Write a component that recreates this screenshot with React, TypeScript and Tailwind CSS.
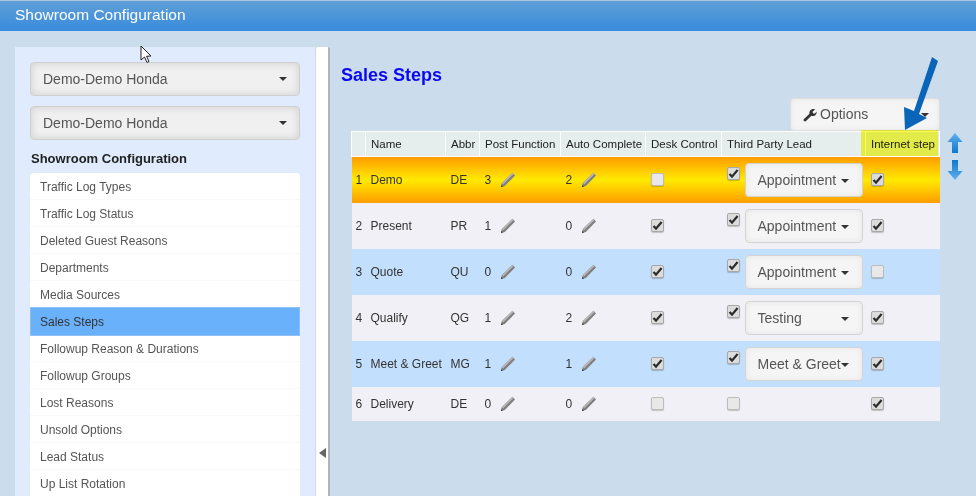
const menu = [
  "Traffic Log Types",
  "Traffic Log Status",
  "Deleted Guest Reasons",
  "Departments",
  "Media Sources",
  "Sales Steps",
  "Followup Reason & Durations",
  "Followup Groups",
  "Lost Reasons",
  "Unsold Options",
  "Lead Status",
  "Up List Rotation",
];

const steps = [
  { n: 1, name: "Demo", abbr: "DE", post: 3, auto: 2, desk: false, third: true, lead: "Appointment", net: true },
  { n: 2, name: "Present", abbr: "PR", post: 1, auto: 0, desk: true, third: true, lead: "Appointment", net: true },
  { n: 3, name: "Quote", abbr: "QU", post: 0, auto: 0, desk: true, third: true, lead: "Appointment", net: false },
  { n: 4, name: "Qualify", abbr: "QG", post: 1, auto: 2, desk: true, third: true, lead: "Testing", net: true },
  { n: 5, name: "Meet & Greet", abbr: "MG", post: 1, auto: 1, desk: true, third: true, lead: "Meet & Greet", net: true },
  { n: 6, name: "Delivery", abbr: "DE", post: 0, auto: 0, desk: false, third: false, lead: "", net: true },
];

function Caret() {
  return <span className="inline-block w-0 h-0 border-x-[4px] border-x-transparent border-t-[4px] border-t-[#333]" />;
}

function Pencil() {
  return (
    <svg width="16" height="16" viewBox="0 0 16 16" className="inline-block">
      <path d="M1 15 L1.8 11 L12.5 0.8 L15 3.4 L4.8 14 Z" fill="#7f7f7f" />
      <path d="M1.8 11 L12.5 0.8 L13.6 2 L3 12.4 Z" fill="#b8b8b8" />
      <path d="M1 15 L1.4 13 L3 14.6 Z" fill="#333" />
    </svg>
  );
}

function Check({ on }: { on: boolean }) {
  return (
    <span
      className={`inline-flex items-center justify-center w-[13px] h-[13px] rounded-[2px] border shadow-[0_1px_1px_rgba(0,0,0,0.2)] ${
        on ? "bg-[#dcdcdc] border-[#a8a8a8]" : "bg-[#e8e8e8] border-[#bcbcbc]"
      }`}
    >
      {on && (
        <svg width="11" height="11" viewBox="0 0 11 11">
          <path d="M1.5 6 L4 8.6 L9.6 2" fill="none" stroke="#2b2b2b" strokeWidth="2.2" />
        </svg>
      )}
    </span>
  );
}

function Select() {
  return (
    <div className="flex items-center justify-between h-[34px] pl-[12px] pr-[12px] rounded-[4px] border border-[#cfcfcf] bg-[#f0f0f0] shadow-[inset_0_0_8px_rgba(0,0,0,0.14)] text-[14px] text-[#555]">
      <span>Demo-Demo Honda</span>
      <Caret />
    </div>
  );
}

function BlueArrow({ down }: { down?: boolean }) {
  return (
    <svg width="16" height="20" viewBox="0 0 16 20" className={down ? "rotate-180" : ""}>
      <defs>
        <linearGradient id={down ? "ad" : "au"} x1="0" y1="0" x2="0" y2="1">
          <stop offset="0" stopColor="#5fb0ee" />
          <stop offset="1" stopColor="#0f78cc" />
        </linearGradient>
      </defs>
      <path d="M8 0 L15.5 9 L11 9 L11 20 L5 20 L5 9 L0.5 9 Z" fill={`url(#${down ? "ad" : "au"})`} />
    </svg>
  );
}

export default function App() {
  return (
    <div className="relative w-[976px] h-[496px] overflow-hidden bg-[#cbdcec] font-['Liberation_Sans',Arial,sans-serif]">
      <header className="h-[31px] pl-[15px] pt-[2px] bg-[linear-gradient(#609fd6,#388bdd)] border-t border-[#a9c6df] text-white text-[15.5px] leading-[24px]">
        Showroom Configuration
      </header>

      <div className="flex h-[465px] pt-[16px] pl-[15px]">
        <aside className="w-[300px] bg-[#e0ecfd] px-[15px] pt-[15px]">
          <div className="flex flex-col gap-[10px]">
            <Select />
            <Select />
          </div>
          <h4 className="mt-[11px] mb-[6px] pl-px text-[13px] leading-[16px] font-bold text-[#222]">Showroom Configuration</h4>
          <ul className="rounded-t-[4px] bg-white text-[12px] text-[#555]">
            {menu.map((m) =>
              m === "Sales Steps" ? (
                <li key={m} className="h-[29px] -my-px relative flex items-center pl-[9px] bg-[#69b1fa] border border-[#8fc0f3] text-[#333]">
                  {m}
                </li>
              ) : (
                <li key={m} className="h-[27px] flex items-center pl-[10px] pt-[2px] border-b border-[#f9f9f9]">
                  {m}
                </li>
              ),
            )}
          </ul>
        </aside>

        <div className="flex flex-col items-center justify-end ml-px w-[14px] pb-[38px] bg-white rounded-t-[2px] border-r-2 border-[#aeb4ba]">
          <span className="w-0 h-0 border-y-[5px] border-y-transparent border-r-[7px] border-r-[#666]" />
        </div>

        <main className="flex-1 pl-[11px]">
          <h2 className="mt-[18px] text-[18px] leading-[20px] font-bold text-[#0a0af0]">Sales Steps</h2>

          <div className="flex justify-end w-[599px] mt-[13px]">
            <div className="flex items-center justify-between w-[150px] h-[33px] pl-[12px] pr-[10px] rounded-[4px] border border-[#dcdcdc] bg-[#f5f5f5] shadow-[inset_0_0_6px_rgba(0,0,0,0.06)] text-[14px] text-[#555]">
              <span className="flex items-center gap-[3px]">
                <svg width="14" height="14" viewBox="0 0 14 14">
                  <path d="M1 13 C0.4 12.4 0.4 11.6 1 11 L6.5 5.8 C6 3.6 7.5 1 10.4 1 C11 1 11.6 1.1 12 1.4 L9.5 3.8 L10.2 5.4 L12 5.6 L13.6 3.4 C14 6.6 11 9 8.4 7.8 L3 13 C2.4 13.6 1.6 13.6 1 13 Z" fill="#333" />
                </svg>
                Options
              </span>
              <Caret />
            </div>
          </div>

          <div className="flex items-start">
            <table className="ml-[10px] w-[588px] table-fixed border-collapse text-[12px] text-[#333]">
              <colgroup>
                <col className="w-[14px]" />
                <col className="w-[80px]" />
                <col className="w-[34px]" />
                <col className="w-[81px]" />
                <col className="w-[85px]" />
                <col className="w-[76px]" />
                <col className="w-[144px]" />
                <col className="w-[74px]" />
              </colgroup>
              <thead>
                <tr className="h-[25px] bg-[#e5eded] text-[11.5px] text-left text-[#222]">
                  <th className="font-medium border border-white" />
                  <th className="font-medium pl-[5px] pt-[2px] border border-white">Name</th>
                  <th className="font-medium pl-[5px] pt-[2px] border border-white whitespace-nowrap">Abbr</th>
                  <th className="font-medium pl-[5px] pt-[2px] border border-white whitespace-nowrap">Post Function</th>
                  <th className="font-medium pl-[5px] pt-[2px] border border-white whitespace-nowrap">Auto Complete</th>
                  <th className="font-medium pl-[5px] pt-[2px] border border-white whitespace-nowrap">Desk Control</th>
                  <th className="font-medium pl-[5px] pt-[2px] border border-white whitespace-nowrap">Third Party Lead</th>
                  <th className="font-medium pl-[5px] pt-[2px] border border-white whitespace-nowrap">Internet step</th>
                </tr>
              </thead>
              <tbody>
                {steps.map((s, i) => (
                  <tr
                    key={s.n}
                    className={`${s.n === 6 ? "h-[34px]" : "h-[46px]"} ${
                      i === 0
                        ? "bg-[linear-gradient(#ff9c00,#ffea00_50%,#ff9c00)]"
                        : i % 2 === 0
                          ? "bg-[#c2dffd]"
                          : "bg-[#f0f0f6]"
                    }`}
                  >
                    <td className="pl-[4px]">{s.n}</td>
                    <td className="pl-[5px] whitespace-nowrap">{s.name}</td>
                    <td className="pl-[5px]">{s.abbr}</td>
                    <td className="pl-[5px]">
                      <span className="inline-flex items-center gap-[9px]">
                        {s.post}
                        <Pencil />
                      </span>
                    </td>
                    <td className="pl-[5px]">
                      <span className="inline-flex items-center gap-[9px]">
                        {s.auto}
                        <Pencil />
                      </span>
                    </td>
                    <td className="pl-[5px]">
                      <span className="flex">
                        <Check on={s.desk} />
                      </span>
                    </td>
                    <td className="pl-[5px]">
                      <div className="flex items-start">
                        <span className={`flex ${s.lead ? "mt-[4px]" : ""}`}>
                          <Check on={s.third} />
                        </span>
                        {s.lead && (
                          <div className="flex items-center justify-between ml-[5px] w-[118px] h-[34px] pl-[12px] pr-[13px] pt-[2px] rounded-[4px] border border-[#d4d4d4] bg-[#f5f5f5] shadow-[inset_0_0_6px_rgba(0,0,0,0.07)] text-[14px] text-[#555]">
                            <span className="whitespace-nowrap">{s.lead}</span>
                            <Caret />
                          </div>
                        )}
                      </div>
                    </td>
                    <td className="pl-[5px]">
                      <span className="flex">
                        <Check on={s.net} />
                      </span>
                    </td>
                  </tr>
                ))}
              </tbody>
            </table>
            <div className="flex flex-col gap-[7px] ml-[7px] mt-[2px]">
              <BlueArrow />
              <BlueArrow down />
            </div>
          </div>
        </main>
      </div>

      {/* yellow marker over the Internet step header */}
      <div className="absolute left-[861px] top-[130px] w-[77px] h-[26px] bg-[#fdfd50] mix-blend-multiply" />

      {/* annotation arrow on top of the options button */}
      <svg className="absolute left-[900px] top-[54px]" width="42" height="78" viewBox="0 0 42 78">
        <path d="M32 3 L38 7 L19 60 L27 64 L5 76 L4 53 L14 57 Z" fill="#0a64b8" />
      </svg>

      {/* mouse pointer */}
      <svg className="absolute left-[140px] top-[45px]" width="13" height="19" viewBox="0 0 13 19">
        <path d="M1 1 L1 15 L4.5 12 L7 17.5 L9 16.5 L6.6 11.3 L11 11 Z" fill="#fff" stroke="#222" strokeWidth="1" />
      </svg>
    </div>
  );
}
